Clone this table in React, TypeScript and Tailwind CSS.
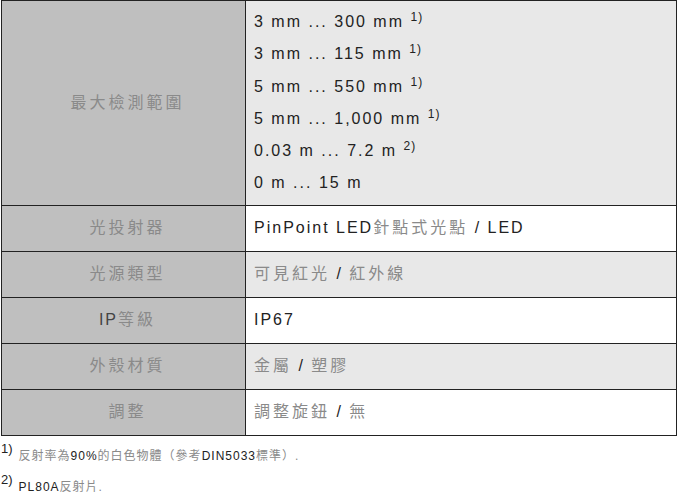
import React from "react";

const font = { fontFamily: '"Liberation Sans", Arial, "Noto Sans CJK TC", sans-serif' };

function Cjk({ children }: { children: React.ReactNode }) {
  return <span className="text-[#8a8a8a] tracking-[3px]">{children}</span>;
}

const ranges: { text: string; note?: number }[] = [
  { text: "3 mm ... 300 mm", note: 1 },
  { text: "3 mm ... 115 mm", note: 1 },
  { text: "5 mm ... 550 mm", note: 1 },
  { text: "5 mm ... 1,000 mm", note: 1 },
  { text: "0.03 m ... 7.2 m", note: 2 },
  { text: "0 m ... 15 m" },
];

const label = "border border-[#222] bg-[#bfbfbf] text-center pl-[8px]";

export default function App() {
  return (
    <div className="w-[680px] h-[496px] bg-white text-[#222] overflow-hidden" style={font}>
      <table className="ml-[1px] w-[676px] border-collapse border border-[#222] text-[16px] tracking-[2px]">
        <tbody>
          {/* Max sensing range */}
          <tr>
            <td className={`w-[244px] align-middle ${label}`}>
              <Cjk>最大檢測範圍</Cjk>
            </td>
            <td className="border border-[#222] bg-[#e8e8e8] pl-[8px] py-[5px]">
              {ranges.map((r) => (
                <div key={r.text} className="leading-[32.3px]">
                  {r.text}
                  {r.note && (
                    <>
                      {" "}
                      <sup className="text-[12px] tracking-[1px]">{r.note})</sup>
                    </>
                  )}
                </div>
              ))}
            </td>
          </tr>

          <tr className="h-[46px]">
            <td className={label}>
              <Cjk>光投射器</Cjk>
            </td>
            <td className="border border-[#222] bg-white pl-[8px]">
              PinPoint LED<Cjk>針點式光點</Cjk> / LED
            </td>
          </tr>

          <tr className="h-[46px]">
            <td className={label}>
              <Cjk>光源類型</Cjk>
            </td>
            <td className="border border-[#222] bg-[#e8e8e8] pl-[8px]">
              <Cjk>可見紅光</Cjk> / <Cjk>紅外線</Cjk>
            </td>
          </tr>

          <tr className="h-[46px]">
            <td className={label}>
              <span className="text-[#444]">IP</span>
              <Cjk>等級</Cjk>
            </td>
            <td className="border border-[#222] bg-white pl-[8px]">IP67</td>
          </tr>

          <tr className="h-[46px]">
            <td className={label}>
              <Cjk>外殼材質</Cjk>
            </td>
            <td className="border border-[#222] bg-[#e8e8e8] pl-[8px]">
              <Cjk>金屬</Cjk> / <Cjk>塑膠</Cjk>
            </td>
          </tr>

          <tr className="h-[46px]">
            <td className={label}>
              <Cjk>調整</Cjk>
            </td>
            <td className="border border-[#222] bg-white pl-[8px]">
              <Cjk>調整旋鈕</Cjk> / <Cjk>無</Cjk>
            </td>
          </tr>
        </tbody>
      </table>

      {/* Footnotes */}
      <div className="pl-[1px] text-[12px] tracking-[1px]">
        <p className="mt-[10px] leading-[20px]">
          <sup className="text-[13px] mr-[6px] tracking-normal">1)</sup>
          <span className="text-[#8a8a8a]">反射率為</span>90%<span className="text-[#8a8a8a]">的白色物體（參考</span>DIN5033<span className="text-[#8a8a8a]">標準）.</span>
        </p>
        <p className="mt-[11px] leading-[20px]">
          <sup className="text-[13px] mr-[6px] tracking-normal">2)</sup>
          PL80A<span className="text-[#8a8a8a]">反射片.</span>
        </p>
      </div>
    </div>
  );
}
